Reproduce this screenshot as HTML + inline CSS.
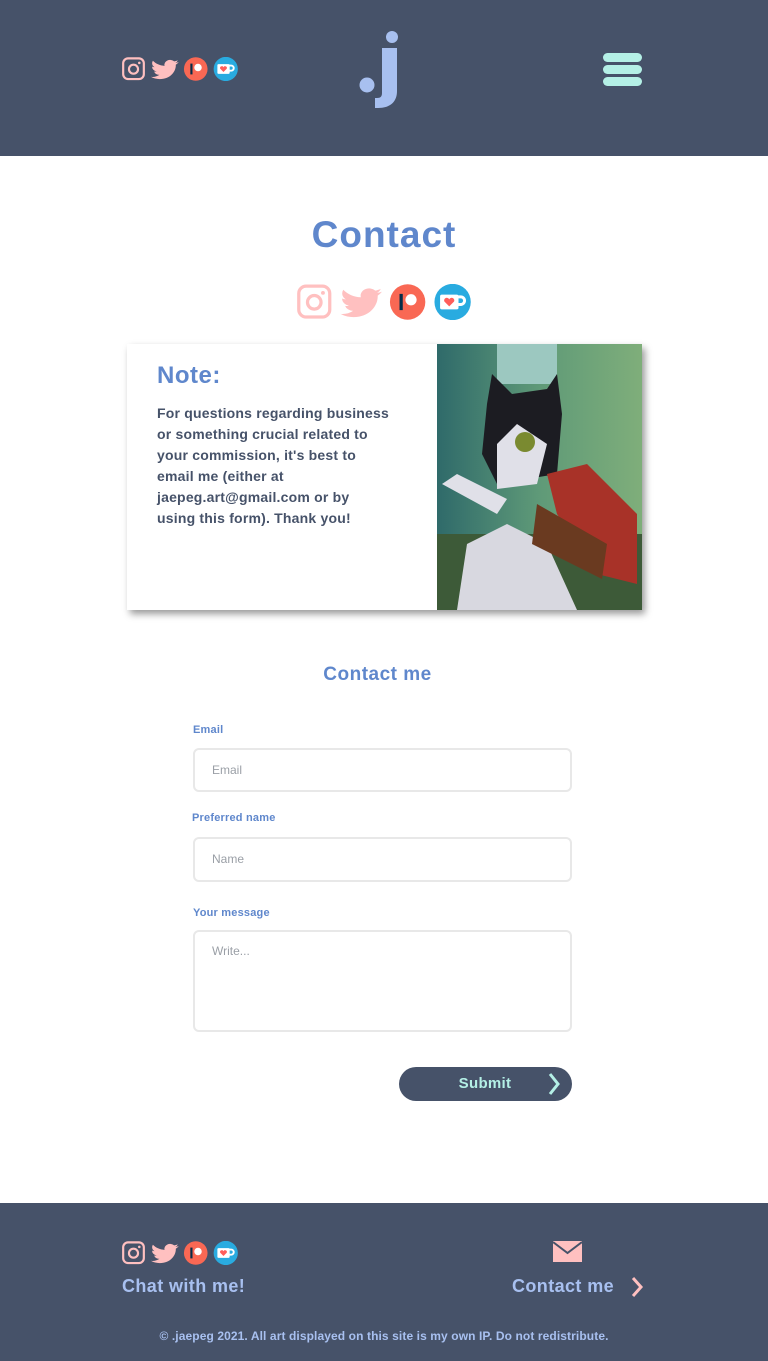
<!DOCTYPE html>
<html><head><meta charset="utf-8"><style>
*{margin:0;padding:0;box-sizing:border-box}
body{width:768px;height:1361px;position:relative;background:#fff;font-family:"Liberation Sans",sans-serif;overflow:hidden}
.abs{position:absolute}
header{position:absolute;left:0;top:0;width:768px;height:156px;background:#465269}
footer{position:absolute;left:0;top:1203px;width:768px;height:158px;background:#465269}
.bar{position:absolute;left:603px;width:39px;height:9px;border-radius:5px;background:#b4f0e6}
h1{position:absolute;left:0;width:768px;top:214px;text-align:center;color:#5f87cc;font-size:37px;font-weight:bold;letter-spacing:1px}
.card{position:absolute;left:127px;top:344px;width:515px;height:266px;background:#fff;box-shadow:3px 4px 7px rgba(0,0,0,.4)}
.lbl{position:absolute;left:193px;color:#5f87cc;font-size:11px;font-weight:bold;letter-spacing:.2px}
.inp{position:absolute;left:193px;width:379px;border:2px solid #e8e8e8;border-radius:6px;color:#9a9fa6;font-size:12px;padding-left:17px}
</style></head><body>
<svg width="0" height="0" style="position:absolute"><defs>
<symbol id="ic" viewBox="0 0 120 24">
<rect x="1.2" y="1.2" width="21" height="21" rx="5" fill="none" stroke="#ffc0c0" stroke-width="2.2"/>
<circle cx="11.7" cy="12.2" r="4.6" fill="none" stroke="#ffc0c0" stroke-width="2.2"/>
<circle cx="17.6" cy="5.8" r="1.3" fill="#ffc0c0"/>
<g transform="translate(29.5,0.5) scale(1.17,1)"><path fill="#ffc0c0" d="M23.953 4.57a10 10 0 01-2.825.775 4.958 4.958 0 002.163-2.723c-.951.555-2.005.959-3.127 1.184a4.92 4.92 0 00-8.384 4.482C7.690 8.095 4.067 6.130 1.640 3.162a4.822 4.822 0 00-.666 2.475c0 1.710.870 3.213 2.188 4.096a4.904 4.904 0 01-2.228-.616v.060a4.923 4.923 0 003.946 4.827 4.996 4.996 0 01-2.212.085 4.936 4.936 0 004.604 3.417 9.867 9.867 0 01-6.102 2.105c-.390 0-.779-.023-1.170-.067a13.995 13.995 0 007.557 2.209c9.053 0 13.998-7.496 13.998-13.985 0-.210 0-.420-.015-.630A9.935 9.935 0 0024 4.590z"/></g>
<circle cx="75" cy="12" r="12" fill="#f96854"/>
<rect x="69.5" y="6.5" width="2.2" height="11" fill="#052d49"/>
<circle cx="77.3" cy="10.5" r="3.8" fill="#fff"/>
<circle cx="105.5" cy="12" r="12.3" fill="#29abe0"/>
<rect x="97" y="7" width="12.5" height="10" rx="1.2" fill="#fff"/>
<path d="M109 8.5h2a2.6 2.6 0 010 5.2h-2" fill="none" stroke="#fff" stroke-width="2"/>
<path d="M103.2 15l-3.3-3.3a1.7 1.7 0 013.3-1.5 1.7 1.7 0 013.3 1.5z" fill="#ff5e5b"/>
</symbol></defs></svg>

<header>
<svg class="abs" style="left:122px;top:57px" width="118" height="24"><use href="#ic"/></svg>
<svg class="abs" style="left:350px;top:25px" width="70" height="90" viewBox="350 25 70 90">
<circle cx="367" cy="85" r="7.5" fill="#a8c0f0"/>
<circle cx="392" cy="37" r="6" fill="#a8c0f0"/>
<path d="M382 48h15v43c0 11-7 17-19 17h-3v-10h2c3.5 0 5-1.5 5-5z" fill="#a8c0f0"/>
</svg>
<div class="bar" style="top:53px"></div><div class="bar" style="top:65px"></div><div class="bar" style="top:77px"></div>
</header>

<h1>Contact</h1>
<svg class="abs" style="left:297px;top:284px" width="177" height="36"><use href="#ic"/></svg>

<div class="card">
<div class="abs" style="left:30px;top:18px;color:#5f87cc;font-size:24px;font-weight:bold;letter-spacing:.5px">Note:</div>
<div class="abs" style="left:30px;top:59px;white-space:nowrap;color:#465269;font-size:14px;font-weight:bold;line-height:21px;letter-spacing:.2px">For questions regarding business<br>or something crucial related to<br>your commission, it's best to<br>email me (either at<br>jaepeg.art@gmail.com or by<br>using this form). Thank you!</div>
<svg class="abs" style="left:310px;top:0" width="205" height="266" viewBox="0 0 205 266">
<defs><linearGradient id="bg" x1="0" x2="1"><stop offset="0" stop-color="#2f6a6a"/><stop offset=".5" stop-color="#5f9a78"/><stop offset="1" stop-color="#7fae7a"/></linearGradient></defs>
<rect width="205" height="266" fill="url(#bg)"/>
<rect x="60" y="0" width="60" height="40" fill="#9cc8c0"/>
<rect x="0" y="190" width="205" height="76" fill="#3d5a38"/>
<path d="M20 266 L30 200 L70 180 L110 200 L140 266Z" fill="#d8d8e0"/>
<path d="M50 60 L55 30 L75 50 L110 45 L120 30 L125 70 L120 130 L60 140 L45 110Z" fill="#1c1c22"/>
<path d="M60 100 L80 80 L110 100 L100 140 L60 145Z" fill="#e0e0e8"/>
<circle cx="88" cy="98" r="10" fill="#7a8a30"/>
<path d="M110 130 L150 120 L200 170 L200 240 L160 230 L120 170Z" fill="#a83228"/>
<path d="M100 160 L170 200 L165 235 L95 200Z" fill="#6a3a20"/>
<path d="M5 140 L20 130 L70 155 L60 170Z" fill="#e0e0e8"/>
</svg>
</div>

<div class="abs" style="left:0;width:755px;top:664px;text-align:center;color:#5f87cc;font-size:19px;font-weight:bold;letter-spacing:.5px">Contact me</div>

<div class="lbl" style="top:724px">Email</div>
<div class="inp" style="top:748px;height:44px;line-height:40px">Email</div>
<div class="lbl" style="top:812px;left:192px">Preferred name</div>
<div class="inp" style="top:837px;height:45px;line-height:41px">Name</div>
<div class="lbl" style="top:907px">Your message</div>
<div class="inp" style="top:930px;height:102px;padding-top:12px">Write...</div>

<div class="abs" style="left:399px;top:1067px;width:173px;height:34px;border-radius:17px;background:#465269"></div>
<div class="abs" style="left:399px;top:1075px;width:172px;text-align:center;color:#b4f0e6;font-size:15px;font-weight:bold;letter-spacing:.3px">Submit</div>
<svg class="abs" style="left:547px;top:1072px" width="14" height="24"><path d="M3 2l8 10-8 10" fill="none" stroke="#b4f0e6" stroke-width="3"/></svg>

<footer>
<svg class="abs" style="left:122px;top:38px" width="118" height="24"><use href="#ic"/></svg>
<div class="abs" style="left:122px;top:73px;color:#a8c0f0;font-size:18px;font-weight:bold;letter-spacing:.4px">Chat with me!</div>
<svg class="abs" style="left:553px;top:38px" width="29" height="21"><rect width="29" height="21" fill="#ffc0c0"/><path d="M0 1l14.5 11L29 1" fill="none" stroke="#465269" stroke-width="2"/></svg>
<div class="abs" style="left:512px;top:73px;color:#a8c0f0;font-size:18px;font-weight:bold;letter-spacing:.4px">Contact me</div>
<svg class="abs" style="left:630px;top:73px" width="14" height="22"><path d="M3 2l8 9-8 9" fill="none" stroke="#ffc0c0" stroke-width="3"/></svg>
<div class="abs" style="left:0;width:768px;top:126px;text-align:center;color:#a8c0f0;font-size:12px;font-weight:bold;letter-spacing:.1px">© .jaepeg 2021. All art displayed on this site is my own IP. Do not redistribute.</div>
</footer>
</body></html>
